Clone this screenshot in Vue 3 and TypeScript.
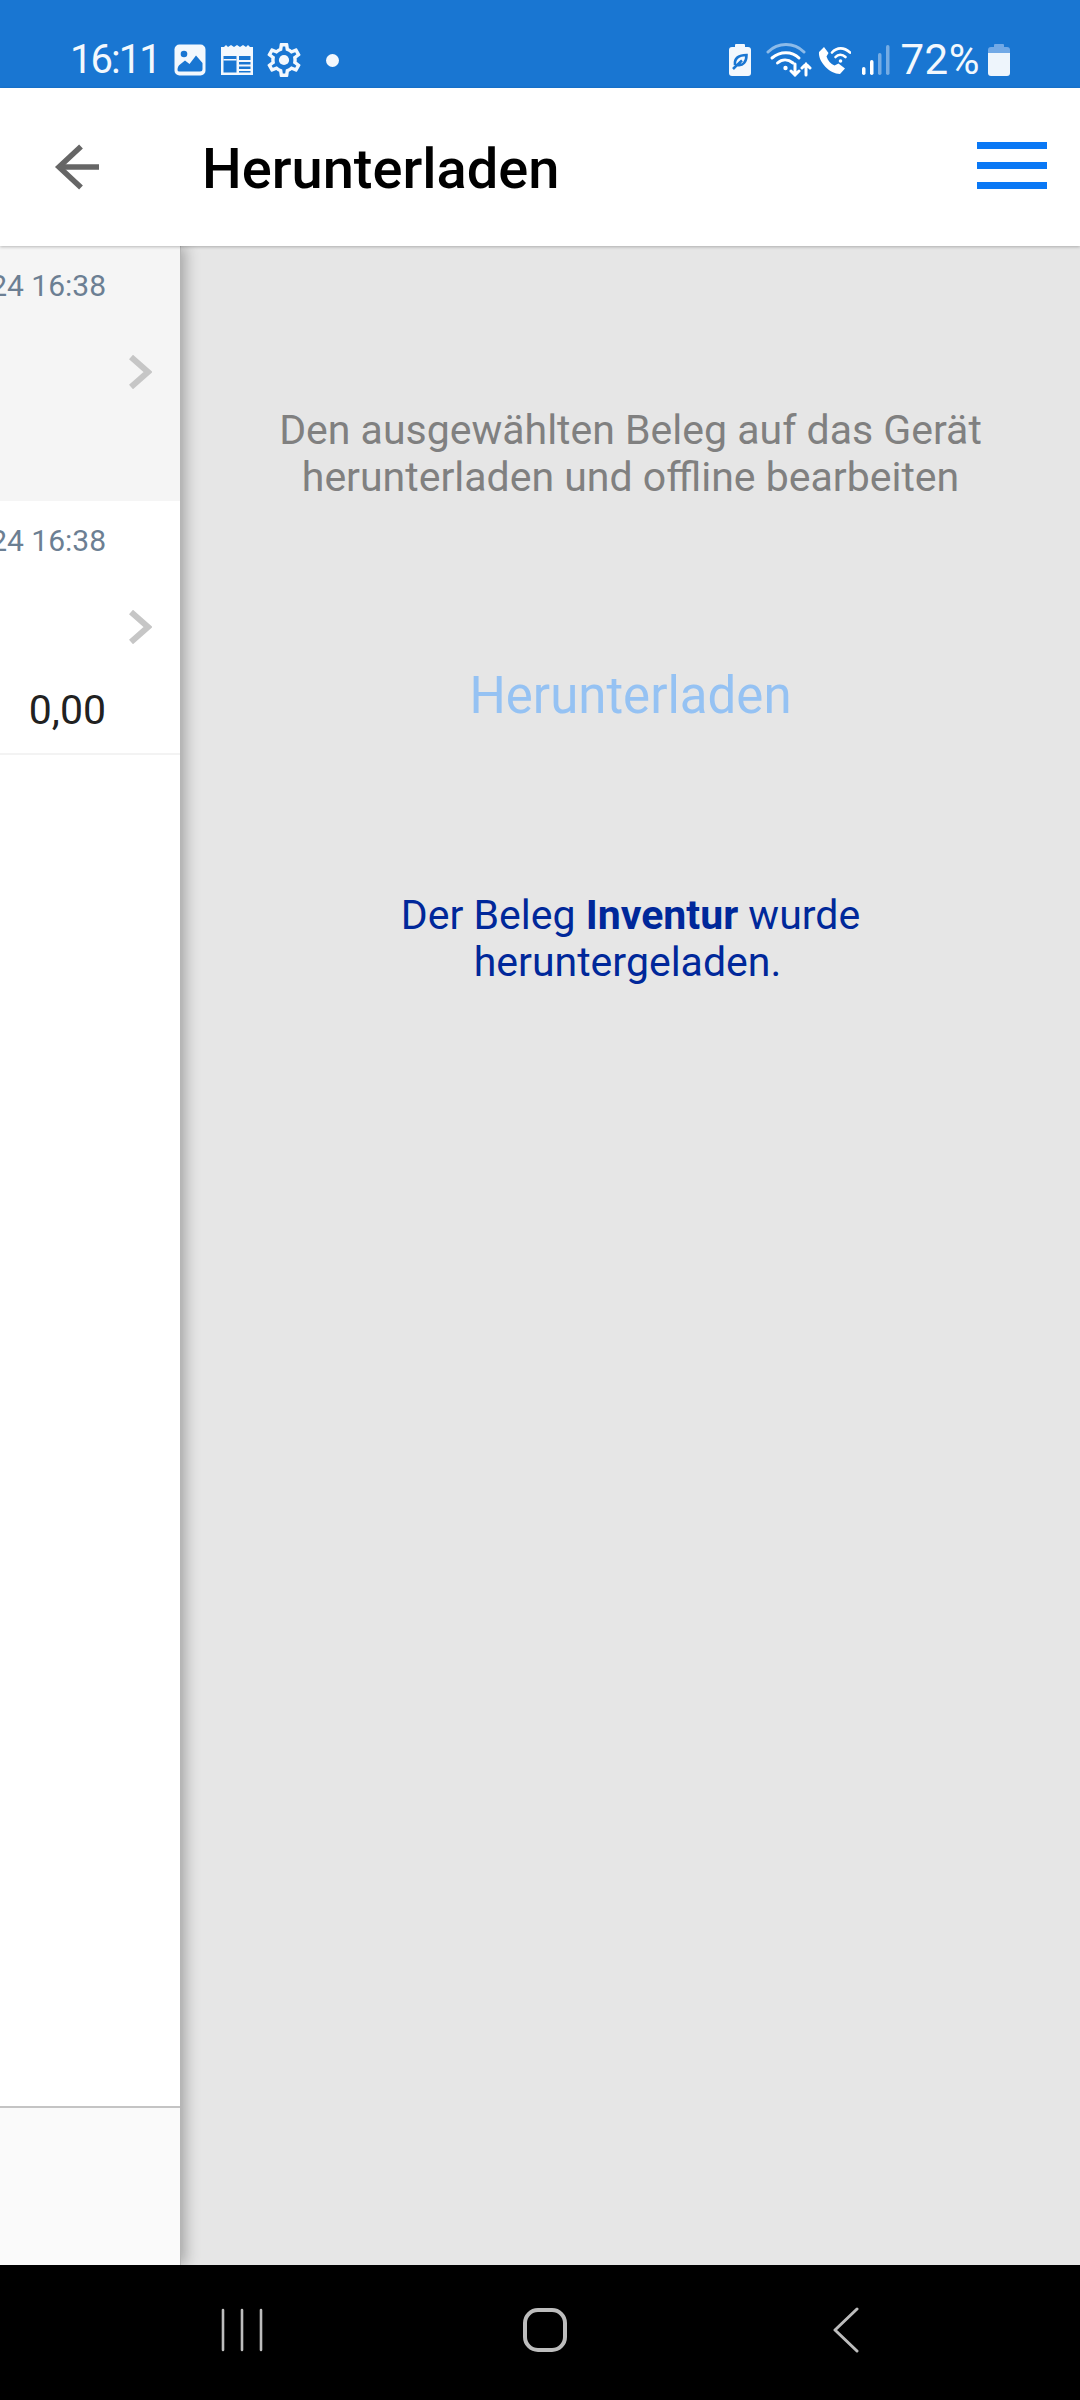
<template>
  <div class="phone">
    <div class="status-bar">
      <div class="status-left">
        <span class="clock">16:11</span>
        <svg width="32" height="32" viewBox="0 0 32 32">
          <rect x="0.5" y="0.5" width="31" height="31" rx="5" fill="#f3f8fd" />
          <circle cx="10" cy="10" r="3.3" fill="#1976d2" />
          <path d="M3.5 26 Q3.5 22 6 20.5 L11 16.5 L15.5 20 L22 11.5 L28.5 19 L28.5 25 Q28.5 27.5 26 27.5 L5.5 27.5 Q3.5 27.5 3.5 26 Z" fill="#1976d2" />
        </svg>
        <svg class="cal" width="34" height="32" viewBox="0 0 34 32">
          <path d="M1 3 L4 3 L6 1 L8 3 L11 1 L14 3 L17 1 L20 3 L23 1 L26 3 L28 1 L30 3 L33 3 L33 31 L1 31 Z" fill="#f3f8fd" />
          <rect x="3.5" y="12" width="27" height="16.5" fill="#1976d2" />
          <rect x="3.5" y="15" width="13" height="1.5" fill="#f3f8fd" />
          <rect x="16.5" y="12" width="2.5" height="17" fill="#f3f8fd" />
          <rect x="19" y="16" width="12" height="2" fill="#f3f8fd" />
          <rect x="19" y="20.5" width="12" height="2" fill="#f3f8fd" />
          <rect x="19" y="25" width="12" height="2" fill="#f3f8fd" />
        </svg>
        <svg class="gear" width="34" height="34" viewBox="2 2 20 20" fill="#f3f8fd">
          <path d="M19.43 12.98c.04-.32.07-.64.07-.98 0-.34-.03-.66-.07-.98l2.11-1.65c.19-.15.24-.42.12-.64l-2-3.46c-.09-.16-.26-.25-.44-.25-.06 0-.12.01-.17.03l-2.49 1c-.52-.4-1.08-.73-1.69-.98l-.38-2.65C14.46 2.18 14.25 2 14 2h-4c-.25 0-.46.18-.49.42l-.38 2.65c-.61.25-1.17.59-1.69.98l-2.49-1c-.06-.02-.12-.03-.18-.03-.17 0-.34.09-.43.25l-2 3.46c-.13.22-.07.49.12.64l2.11 1.65c-.04.32-.07.65-.07.98 0 .33.03.66.07.98l-2.11 1.65c-.19.15-.24.42-.12.64l2 3.46c.09.16.26.25.44.25.06 0 .12-.01.17-.03l2.49-1c.52.4 1.08.73 1.69.98l.38 2.65c.03.24.24.42.49.42h4c.25 0 .46-.18.49-.42l.38-2.65c.61-.25 1.17-.59 1.69-.98l2.49 1c.06.02.12.03.18.03.17 0 .34-.09.43-.25l2-3.46c.12-.22.07-.49-.12-.64l-2.11-1.65zM17.45 11.27c.04.31.05.52.05.73 0 .21-.02.43-.05.73l-.14 1.13.89.7 1.08.84-.7 1.21-1.27-.51-1.04-.42-.9.68c-.43.32-.84.56-1.25.73l-1.06.43-.16 1.13-.2 1.35h-1.4l-.19-1.35-.16-1.13-1.06-.43c-.43-.18-.83-.41-1.23-.71l-.91-.7-1.06.43-1.27.51-.7-1.21 1.08-.84.89-.7-.14-1.13c-.03-.31-.05-.54-.05-.74s.02-.43.05-.73l.14-1.13-.89-.7-1.08-.84.7-1.21 1.27.51 1.04.42.9-.68c.43-.32.84-.56 1.25-.73l1.06-.43.16-1.13.2-1.35h1.39l.19 1.35.16 1.13 1.06.43c.43.18.83.41 1.23.71l.91.7 1.06-.43 1.27-.51.7 1.21-1.07.85-.89.7.14 1.13z" />
          <circle cx="12" cy="12" r="3" />
        </svg>
        <span class="dot"></span>
      </div>
      <div class="status-right">
        <svg width="24" height="32" viewBox="0 0 24 32">
          <rect x="7" y="0" width="10" height="4" rx="1" fill="#f3f8fd" />
          <rect x="1" y="3" width="22" height="29" rx="3" fill="#f3f8fd" />
          <path d="M7 21 C6 14 11 11 18.500 11 C18.500 18 15 22 9.500 21 M5 25 C8 22 11 19 14 16.500" fill="none" stroke="#1976d2" stroke-width="2.600" />
        </svg>
        <svg class="wifi" width="46" height="34" viewBox="0 0 46 34" fill="none" stroke="#fff" stroke-width="3" stroke-linecap="round">
          <path d="M2 9 C12 -1 28 -1 38 9" opacity="0.5" />
          <path d="M6 15 C14 8 26 8 33 15" />
          <path d="M11.5 20 C16 16 22 16 27 20" />
          <circle cx="19.5" cy="25" r="2.2" fill="#fff" stroke="none" />
          <path d="M29 21 V32 M25 28 L29 32 L33 28" />
          <path d="M40 32 V21 M36 25 L40 21 L44 25" />
        </svg>
        <svg class="call" width="34" height="32" viewBox="0 0 34 32">
          <path d="M2 8 L7 3 L11.5 9 L9.5 12.5 C11 17 13.5 19.5 17.5 21.5 L21.5 19.5 L28 24.5 L23 30 C13 30 1 18 2 8 Z" fill="#fff" />
          <g fill="none" stroke="#fff" stroke-width="2.6" stroke-linecap="round">
            <path d="M15 8.5 C20 3 27 3 33 8.5" />
            <path d="M18.5 13 C21 10 25.5 10 28.5 13" />
          </g>
          <circle cx="23.5" cy="17" r="1.8" fill="#fff" />
        </svg>
        <svg class="signal" width="28" height="30" viewBox="0 0 28 30">
          <rect x="0" y="22" width="3.5" height="8" rx="1.7" fill="#fff" />
          <rect x="8" y="15" width="3.5" height="15" rx="1.7" fill="#fff" />
          <rect x="16" y="8" width="3.5" height="22" rx="1.7" fill="#fff" opacity="0.4" />
          <rect x="24" y="0" width="3.5" height="30" rx="1.7" fill="#fff" opacity="0.4" />
        </svg>
        <span class="pct">72%</span>
        <svg class="batt" width="22" height="32" viewBox="0 0 22 32">
          <rect x="6" y="0" width="10" height="4" rx="1" fill="#72a9e6" />
          <path d="M0 6 a3 3 0 0 1 3 -3 h16 a3 3 0 0 1 3 3 v6 h-22 z" fill="#72a9e6" />
          <path d="M0 9 h22 v20 a3 3 0 0 1 -3 3 h-16 a3 3 0 0 1 -3 -3 z" fill="#eef5fc" />
        </svg>
      </div>
    </div>

    <header class="top-bar">
      <svg class="back" width="46" height="46" viewBox="0 0 46 46" fill="none" stroke="#666" stroke-width="5.5">
        <path d="M28 2.5 L6 23 L28 43.5" />
        <path d="M6 23 H46" />
      </svg>
      <h1 class="title">Herunterladen</h1>
      <div class="burger">
        <span></span><span></span><span></span>
      </div>
    </header>

    <main class="content">
      <aside class="list-panel">
        <div v-for="row in rows" :key="row.id" class="doc-row" :class="{ active: row.active }">
          <div class="doc-date">{{ row.date }}</div>
          <svg class="chevron" width="24" height="34" viewBox="0 0 24 34" fill="none" stroke="#c6c6c6" stroke-width="6">
            <path d="M3 2 L20 17 L3 32" />
          </svg>
          <div class="doc-sum">{{ row.sum }}</div>
        </div>
        <div class="list-fill"></div>
        <div class="list-footer"></div>
      </aside>
      <section class="detail">
        <p class="hint">Den ausgewählten Beleg auf das Gerät<br />herunterladen und offline bearbeiten</p>
        <button class="download" type="button" disabled>Herunterladen</button>
        <p class="result">Der Beleg <b>Inventur</b> wurde<br /><span class="result-end">heruntergeladen.</span></p>
      </section>
    </main>

    <nav class="nav-bar">
      <svg width="44" height="44" viewBox="0 0 44 44" stroke="#bdbdbd" stroke-width="2.6" stroke-linecap="round">
        <path d="M3 2 V42 M22 2 V42 M41 2 V42" />
      </svg>
      <svg class="home" width="46" height="46" viewBox="0 0 46 46" fill="none" stroke="#bdbdbd" stroke-width="4">
        <rect x="3" y="3" width="40" height="40" rx="13" />
      </svg>
      <svg class="nav-back" width="28" height="46" viewBox="0 0 28 46" fill="none" stroke="#bdbdbd" stroke-width="3" stroke-linecap="round" stroke-linejoin="round">
        <path d="M25 2 L3 23 L25 44" />
      </svg>
    </nav>
  </div>
</template>

<script setup lang="ts">
interface DocRow {
  id: number
  date: string
  sum: string
  active: boolean
}

const rows: DocRow[] = [
  { id: 1, date: '24 16:38', sum: '', active: true },
  { id: 2, date: '24 16:38', sum: '0,00', active: false }
]
</script>

<style>
html,
body {
  margin: 0;
  background: #000;
}
</style>

<style scoped>
.phone {
  width: 1080px;
  height: 2400px;
  display: flex;
  flex-direction: column;
  font-family: Roboto, 'Liberation Sans', sans-serif;
  overflow: hidden;
}

.status-bar {
  height: 88px;
  flex: none;
  box-sizing: border-box;
  padding: 35px 70px 0 70px;
  background: #1976d2;
  display: flex;
  justify-content: space-between;
  align-items: flex-start;
  color: #f3f8fd;
}

.status-left,
.status-right {
  display: flex;
  align-items: center;
  height: 50px;
}

.clock {
  width: 104px;
  font-size: 40px;
  line-height: 50px;
  letter-spacing: -2px;
}

.cal {
  margin-left: 14px;
}

.gear {
  margin-left: 13px;
}

.dot {
  width: 13px;
  height: 13px;
  border-radius: 50%;
  background: #f3f8fd;
  margin-left: 25px;
}

.wifi {
  margin-left: 14px;
}

.call {
  margin-left: 5px;
}

.signal {
  margin-left: 11px;
}

.pct {
  font-size: 42px;
  line-height: 50px;
  letter-spacing: 0.5px;
  margin-left: 11px;
}

.batt {
  margin-left: 8px;
}

.top-bar {
  height: 158px;
  flex: none;
  box-sizing: border-box;
  padding: 0 33px 0 53px;
  display: flex;
  align-items: center;
  background: #fff;
  position: relative;
  z-index: 2;
  box-shadow: 0 1px 3px rgba(0, 0, 0, 0.25);
}

.title {
  margin: 3px 0 0 103px;
  font-size: 56px;
  font-weight: 500;
  color: #000;
  flex: 1;
}

.burger {
  width: 70px;
  display: flex;
  flex-direction: column;
  gap: 13px;
  margin-top: -4px;
}

.burger span {
  height: 7px;
  background: #0a78f5;
}

.content {
  flex: 1;
  display: flex;
  min-height: 0;
}

.list-panel {
  width: 180px;
  flex: none;
  display: flex;
  flex-direction: column;
  background: #fff;
  position: relative;
  z-index: 1;
  border-right: 1px solid #b5b5b5;
  box-shadow: 4px 0 14px rgba(0, 0, 0, 0.3);
}

.doc-row {
  height: 254px;
  position: relative;
  overflow: hidden;
  box-sizing: border-box;
  border-bottom: 2px solid #f3f3f3;
}

.doc-row.active {
  height: 255px;
  background: #f5f5f5;
  border-bottom: none;
}

.doc-date {
  position: absolute;
  right: 74px;
  top: 22px;
  font-size: 30px;
  line-height: 36px;
  color: #6c7f93;
  white-space: nowrap;
}

.chevron {
  position: absolute;
  right: 28px;
  top: 109px;
}

.doc-sum {
  position: absolute;
  right: 74px;
  top: 186px;
  font-size: 41px;
  line-height: 46px;
  color: #212121;
}

.list-fill {
  flex: 1;
}

.list-footer {
  height: 157px;
  flex: none;
  background: #fafafa;
  border-top: 2px solid #c4c4c4;
}

.detail {
  flex: 1;
  background: #e6e6e6;
  text-align: center;
  padding-top: 161px;
}

.hint {
  margin: 0;
  font-size: 41px;
  line-height: 47px;
  color: #808080;
}

.download {
  display: block;
  width: 100%;
  margin: 165px 0 0;
  padding: 0;
  border: none;
  background: none;
  font-family: inherit;
  font-size: 51px;
  line-height: 60px;
  color: #95c2f3;
}

.result {
  margin: 166px 0 0;
  font-size: 41px;
  line-height: 47px;
  color: #00289a;
}

.result b {
  font-weight: 700;
}

.result-end {
  display: inline-block;
  margin-right: 6px;
}

.nav-bar {
  height: 135px;
  flex: none;
  box-sizing: border-box;
  padding: 0 0 5px 220px;
  background: #000;
  display: flex;
  align-items: center;
  position: relative;
  z-index: 3;
}

.home {
  margin-left: 258px;
}

.nav-back {
  margin-left: 264px;
}
</style>
